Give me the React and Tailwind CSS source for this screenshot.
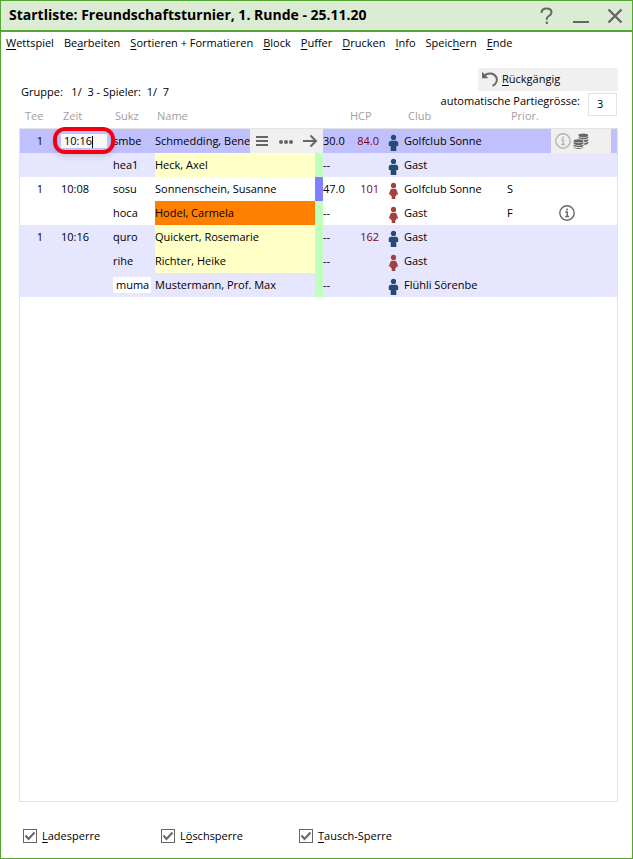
import { useState } from 'react'

const menu = [
  ['', 'W', 'ettspiel'],
  ['Be', 'a', 'rbeiten'],
  ['', 'S', 'ortieren + Formatieren'],
  ['', 'B', 'lock'],
  ['', 'P', 'uffer'],
  ['', 'D', 'rucken'],
  ['', 'I', 'nfo'],
  ['Speic', 'h', 'ern'],
  ['', 'E', 'nde'],
]

const locks = [
  ['lade', '', 'L', 'adesperre'],
  ['loesch', 'L', 'ö', 'schsperre'],
  ['tausch', '', 'T', 'ausch-Sperre'],
]

const players = [
  { tee: '1', zeit: '10:16', sukz: 'smbe', name: 'Schmedding, Bene', hcp: '30.0', spv: '84.0', sex: 'm', club: 'Golfclub Sonne', row: 'bg-[#c0c0ff]', selected: true },
  { sukz: 'hea1', name: 'Heck, Axel', hcp: '--', sex: 'm', club: 'Gast', row: 'bg-[#e6e6ff]', mark: 'bg-[#ffffc8]', strip: 'bg-[#c0ffc0]' },
  { tee: '1', zeit: '10:08', sukz: 'sosu', name: 'Sonnenschein, Susanne', hcp: '47.0', spv: '101', sex: 'f', club: 'Golfclub Sonne', prior: 'S', strip: 'bg-[#8080ff]' },
  { sukz: 'hoca', name: 'Hodel, Carmela', hcp: '--', sex: 'f', club: 'Gast', prior: 'F', mark: 'bg-[#ff8000]', strip: 'bg-[#c0ffc0]', info: true },
  { tee: '1', zeit: '10:16', sukz: 'quro', name: 'Quickert, Rosemarie', hcp: '--', spv: '162', sex: 'm', club: 'Gast', row: 'bg-[#e6e6ff]', mark: 'bg-[#ffffc8]', strip: 'bg-[#c0ffc0]' },
  { sukz: 'rihe', name: 'Richter, Heike', hcp: '--', sex: 'f', club: 'Gast', row: 'bg-[#e6e6ff]', mark: 'bg-[#ffffc8]', strip: 'bg-[#c0ffc0]' },
  { sukz: 'muma', name: 'Mustermann, Prof. Max', hcp: '--', sex: 'm', club: 'Flühli Sörenbe', row: 'bg-[#e6e6ff]', strip: 'bg-[#c0ffc0]', editSukz: true },
]

function Hotkey({ parts }) {
  const [before, key, after] = parts
  return (
    <span>
      {before}
      <span className="underline underline-offset-2">{key}</span>
      {after}
    </span>
  )
}

function Person({ sex }) {
  return sex === 'm' ? (
    <svg width="11" height="18" viewBox="0 0 11 18" fill="#264a73" className="block">
      <circle cx="5.5" cy="3.4" r="2.6" />
      <path d="M2.2 6.800h6.600L10.200 8.200V12H8.300v5H2.700v-5H.8V8.200z" />
    </svg>
  ) : (
    <svg width="11" height="18" viewBox="0 0 11 18" fill="#a33f3f" className="block">
      <circle cx="5.5" cy="3.4" r="2.6" />
      <path d="M3.500 6.800h4L8.600 8 10.300 12.500H8.100L8.600 14H7.300v3H3.700v-3H2.400l.5-1.500H.7L2.400 8z" />
    </svg>
  )
}

function InfoIcon({ className }) {
  return (
    <svg width="16" height="16" viewBox="0 0 16 16" fill="none" stroke="currentColor" className={className}>
      <circle cx="8" cy="8" r="7.2" strokeWidth="1.4" />
      <path d="M6.3 7H8.2v4.4M6.2 11.5h3.8" strokeWidth="1.4" />
      <circle cx="8" cy="4.4" r="1" fill="currentColor" stroke="none" />
    </svg>
  )
}

function CoinsIcon() {
  return (
    <svg width="16" height="16" viewBox="0 0 16 16" fill="#666" className="block">
      <ellipse cx="10.3" cy="2.3" rx="4.9" ry="1.9" />
      <path d="M5.6 3.7c2 1.5 7.5 1.5 9.600-.2v1.600c-1 1-3 1.500-5 1.400-1.500-.8-3.500-1-4.600-1.100z" />
      <path d="M11 7.300c1.700 0 3.300-.5 4.200-1.200v1.700c-.8.900-2.300 1.300-3.900 1.300z" />
      <path d="M11.300 10c1.500-.1 3-.5 3.900-1.200v1.700c-.8.900-2.300 1.300-3.900 1.400z" />
      <ellipse cx="5.500" cy="7.900" rx="4.900" ry="1.700" />
      <path d="M.6 9.100c2 1.500 7.700 1.500 9.800 0v1.600c-2 1.700-7.800 1.700-9.800 0z" />
      <path d="M.6 11.600c2 1.500 7.700 1.500 9.800 0v1.400c-2 1.600-7.800 1.600-9.800 0z" />
      <path d="M.6 13.900c2 1.400 7.700 1.400 9.800 0v.7c-2 1.700-7.800 1.700-9.800 0z" />
    </svg>
  )
}

function TitleBar() {
  return (
    <header className="flex items-center justify-between border-b-2 border-[#55a630] bg-[#dcebd4] pr-2 pl-2">
      <h1 className="h-[29px] text-sm leading-[27px] font-bold">
        Startliste: Freundschaftsturnier, 1. Runde - 25.11.20
      </h1>
      <div className="flex items-center gap-[16px] text-[#666]">
        <button aria-label="Hilfe">
          <svg width="18" height="18" viewBox="0 0 18 18" fill="none" stroke="currentColor" strokeWidth="2" className="block">
            <path d="M3.500 6C3.500 3 5.500 1.500 8.500 1.500s5 1.500 5 4c0 3.200-4.700 3.300-4.700 6.300v1" />
            <path d="M8.800 14.500v2.500" />
          </svg>
        </button>
        <button aria-label="Minimieren">
          <svg width="18" height="18" viewBox="0 0 18 18" fill="currentColor" className="block">
            <path d="M1 14h16v2H1z" />
          </svg>
        </button>
        <button aria-label="Schliessen">
          <svg width="18" height="18" viewBox="0 0 18 18" fill="none" stroke="currentColor" strokeWidth="2.400" className="block">
            <path d="M2.500 2.500l13 13M15.500 2.500l-13 13" />
          </svg>
        </button>
      </div>
    </header>
  )
}

function RowActions() {
  return (
    <div className="absolute inset-y-0 -right-2 z-10 flex w-[73px] items-center justify-between bg-[#f0f0f0] pr-[5px] pl-1 text-[#666]">
      <button aria-label="Menü">
        <svg width="16" height="16" viewBox="0 0 16 16" fill="currentColor" className="block">
          <path d="M2 3h12v2H2zM2 7h12v2H2zM2 11h12v2H2z" />
        </svg>
      </button>
      <button aria-label="Mehr">
        <svg width="16" height="16" viewBox="0 0 16 16" fill="currentColor" className="block">
          <circle cx="3" cy="9" r="2" />
          <circle cx="8" cy="9" r="2" />
          <circle cx="13" cy="9" r="2" />
        </svg>
      </button>
      <button aria-label="Öffnen">
        <svg width="16" height="16" viewBox="0 0 16 16" fill="none" stroke="currentColor" strokeWidth="2" className="block">
          <path d="M1 8h13M8.500 2.500L14 8l-5.500 5.500" />
        </svg>
      </button>
    </div>
  )
}

function TimeEditor({ value, onChange }) {
  return (
    <div className="absolute -top-0.5 -left-2 z-10 flex h-[27px] w-[62px] items-center rounded-xl border-4 border-[#f00010] px-1 shadow-md">
      <div className="relative w-full">
        <input
          aria-label="Zeit"
          value={value}
          onChange={(e) => onChange(e.target.value)}
          className="block h-[14px] w-full bg-[#f8f8f8] pl-[3px] leading-[14px] outline-none"
        />
        <span className="absolute top-0.5 left-[31px] h-3 w-px bg-black" />
      </div>
    </div>
  )
}

function PlayerRow({ p }) {
  const [zeit, setZeit] = useState(p.zeit)
  const [sukz, setSukz] = useState(p.sukz)

  return (
    <tr className={`h-6 ${p.row || 'bg-white'}`}>
      <td className="border-l border-[#e3e3e3] pr-[18px] text-right">{p.tee}</td>
      <td className="relative">{p.selected ? <TimeEditor value={zeit} onChange={setZeit} /> : zeit}</td>
      <td>
        {p.editSukz ? (
          <input
            aria-label="Suchkürzel"
            value={sukz}
            onChange={(e) => setSukz(e.target.value)}
            className="block h-4 w-[38px] bg-white pl-[3px] outline-none"
          />
        ) : (
          sukz
        )}
      </td>
      <td className={`relative whitespace-nowrap ${p.mark || ''}`}>
        {p.name}
        {p.selected && <RowActions />}
      </td>
      <td className={p.strip || ''} />
      <td>{p.hcp}</td>
      <td className="pr-[9px] text-right text-[#800020]">{p.spv}</td>
      <td className="pt-1">
        <Person sex={p.sex} />
      </td>
      <td className="whitespace-nowrap">{p.club}</td>
      <td>{p.prior}</td>
      <td className="border-r border-[#e3e3e3]">
        {p.selected && (
          <div className="mr-1.5 flex h-6 items-center gap-0.5 bg-[#f0f0f0] pl-1">
            <InfoIcon className="block text-[#b4b4b4]" />
            <CoinsIcon />
          </div>
        )}
        {p.info && <InfoIcon className="ml-2 block text-[#666]" />}
      </td>
    </tr>
  )
}

function StartList() {
  return (
    <table className="-mt-2 w-full table-fixed border-separate border-spacing-0">
      <colgroup>
        <col className="w-[42px]" />
        <col className="w-[52px]" />
        <col className="w-[42px]" />
        <col className="w-[160px]" />
        <col className="w-[8px]" />
        <col className="w-[27px]" />
        <col className="w-[38px]" />
        <col className="w-[16px]" />
        <col className="w-[103px]" />
        <col className="w-[44px]" />
        <col />
      </colgroup>
      <thead>
        <tr className="h-[21px] text-left text-[#a0a0a0] [&>th]:border-b [&>th]:border-[#e3e3e3] [&>th]:pb-1 [&>th]:font-normal">
          <th className="pl-1.5">Tee</th>
          <th className="pl-0.5">Zeit</th>
          <th className="pl-0.5">Sukz</th>
          <th className="pl-0.5">Name</th>
          <th />
          <th />
          <th>HCP</th>
          <th />
          <th className="pl-1">Club</th>
          <th className="pl-1">Prior.</th>
          <th />
        </tr>
      </thead>
      <tbody>
        {players.map((p) => (
          <PlayerRow key={p.sukz} p={p} />
        ))}
      </tbody>
    </table>
  )
}

export default function App() {
  const [size, setSize] = useState('3')

  return (
    <div className="flex min-h-screen flex-col border border-[#55a630] bg-white font-['Open_Sans',sans-serif] text-[11px] leading-4 text-black">
      <TitleBar />

      <nav className="flex h-[22px] items-center gap-[10px] pl-[5px]">
        {menu.map((parts) => (
          <button key={parts.join('')}>
            <Hotkey parts={parts} />
          </button>
        ))}
      </nav>

      <main className="flex flex-1 flex-col pt-[14px] pr-[14px] pl-[18px]">
        <div className="flex justify-between">
          <p className="pt-4 pl-0.5 whitespace-pre">{'Gruppe:   1/  3 - Spieler:  1/  7'}</p>
          <div className="flex flex-col items-end gap-0.5">
            <button className="flex h-[23px] w-[140px] items-center gap-1 bg-[#f0f0f0] pb-0.5 pl-1">
              <svg width="16" height="16" viewBox="0 0 16 16" fill="none" stroke="#666" strokeWidth="2" className="block">
                <path d="M2.500 4.500C6 1.500 12 1.800 14.200 6c1.600 3.500-.2 7-3.700 8.800" />
                <path d="M0 .8V7.200h6.400z" fill="#666" stroke="none" />
              </svg>
              <Hotkey parts={['', 'R', 'ückgängig']} />
            </button>
            <div className="flex gap-2 pr-px">
              <label htmlFor="groesse">automatische Partiegrösse:</label>
              <input
                id="groesse"
                value={size}
                onChange={(e) => setSize(e.target.value)}
                className="h-[23px] w-[29px] border border-[#e3e3e3] pb-0.5 pl-2 outline-none"
              />
            </div>
          </div>
        </div>

        <StartList />
        <div className="flex-1 border-x border-b border-[#e3e3e3]" />
      </main>

      <footer className="flex h-14 items-center pt-3 pl-[22px]">
        {locks.map(([id, ...parts]) => (
          <label key={id} className="flex w-[138px] items-center gap-[5px]">
            <span className="relative">
              <input type="checkbox" defaultChecked className="peer block size-[14px] appearance-none border border-[#666] bg-white" />
              <svg
                width="14"
                height="14"
                viewBox="0 0 14 14"
                fill="none"
                stroke="#666"
                strokeWidth="2"
                className="pointer-events-none absolute inset-0 hidden peer-checked:block"
              >
                <path d="M2.500 6.500l3 3.500 6-6.500" />
              </svg>
            </span>
            <Hotkey parts={parts} />
          </label>
        ))}
      </footer>
    </div>
  )
}
